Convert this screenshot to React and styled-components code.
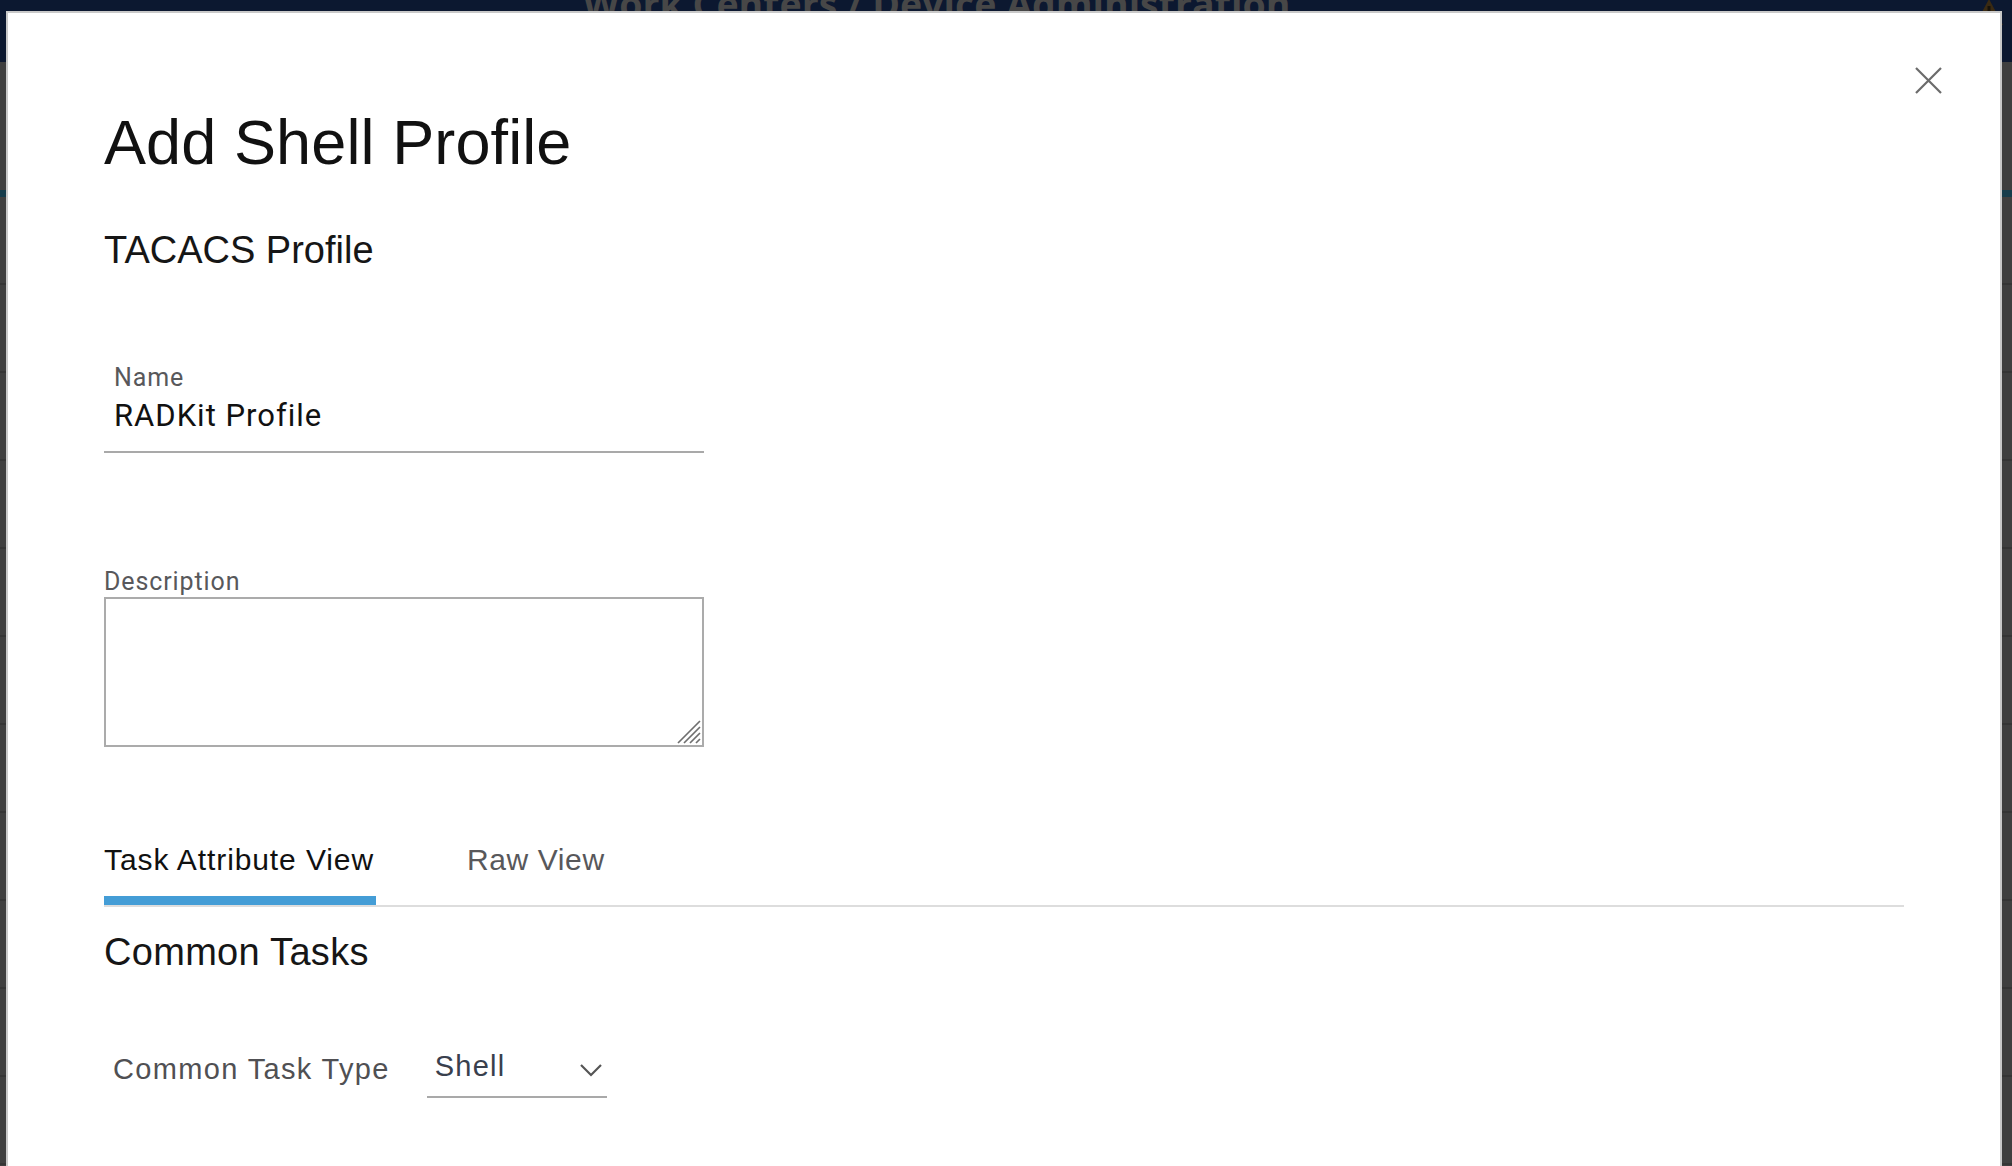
import React from "react";
import styled, { createGlobalStyle } from "styled-components";

const GlobalStyle = createGlobalStyle`
  html, body {
    margin: 0;
    padding: 0;
    height: 100%;
    overflow: hidden;
    background: #3e3e3e;
  }
  #root { height: 100%; }
  * { box-sizing: border-box; }
`;

const Page = styled.div`
  position: relative;
  height: 1166px;
  display: flex;
  flex-direction: column;
  background: #3e3e3e;
  overflow: hidden;
`;

const Header = styled.header`
  flex: 0 0 62px;
  display: flex;
  align-items: flex-start;
  padding-left: 583px;
  padding-right: 8px;
  background: #0c1830;
  overflow: hidden;
`;

const HeaderTitle = styled.div`
  margin-top: -15px;
  font-family: "Open Sans", "DejaVu Sans", sans-serif;
  font-weight: 700;
  font-size: 37.5px;
  line-height: 1;
  color: #474747;
  white-space: nowrap;
`;

const HeaderIcon = styled.svg`
  margin-left: auto;
  margin-top: -2px;
  flex: 0 0 auto;
`;

const SubHeader = styled.div`
  flex: 0 0 128px;
  background: #3f3f3f;
`;

const AccentLine = styled.div`
  flex: 0 0 7px;
  background: #163c4b;
`;

const BgRow = styled.div`
  flex: 0 0 88px;
  border-bottom: 2px solid #353535;
  background: #3f3f3f;
`;

const Modal = styled.section`
  position: absolute;
  left: 6px;
  top: 11px;
  right: 10px;
  bottom: -200px;
  background: #ffffff;
  border: 2px solid #c9c9c9;
  padding: 98px 96px 0;
  display: flex;
  flex-direction: column;
  align-items: flex-start;
`;

const CloseButton = styled.button`
  position: absolute;
  top: 54px;
  right: 58px;
  width: 27px;
  height: 27px;
  padding: 0;
  border: 0;
  background: transparent;
  cursor: pointer;
  display: flex;
`;

const Title = styled.h1`
  margin: 0;
  font-family: "Liberation Sans", Arial, sans-serif;
  font-weight: 400;
  font-size: 63px;
  line-height: 63px;
  letter-spacing: 0.1px;
  color: #111111;
`;

const SectionTitle = styled.h2`
  margin: ${(p) => p.$mt}px 0 0;
  font-family: "Liberation Sans", Arial, sans-serif;
  font-weight: 400;
  font-size: 38px;
  line-height: 38px;
  letter-spacing: ${(p) => p.$ls || 0}px;
  color: #161616;
`;

const Field = styled.div`
  margin-top: ${(p) => p.$mt}px;
  width: 600px;
  display: flex;
  flex-direction: column;
`;

const FieldLabel = styled.label`
  display: block;
  padding-left: ${(p) => (p.$inset ? 10 : 0)}px;
  font-family: Roboto, "Liberation Sans", sans-serif;
  font-size: 25px;
  line-height: 25px;
  letter-spacing: 0.9px;
  color: #58585b;
`;

const TextValue = styled.div`
  margin-top: 10px;
  padding: 0 10px 20px;
  border-bottom: 2px solid #a9a9a9;
  font-family: Roboto, "Liberation Sans", sans-serif;
  font-size: 31px;
  line-height: 31px;
  letter-spacing: 1px;
  color: #111111;
`;

const AreaWrap = styled.div`
  position: relative;
  margin-top: 3px;
  width: 600px;
  height: 150px;
  display: flex;
`;

const TextArea = styled.textarea`
  width: 100%;
  height: 100%;
  border: 2px solid #ababab;
  border-radius: 0;
  padding: 8px;
  font-family: Roboto, sans-serif;
  font-size: 24px;
  resize: none;
  outline: none;
  background: #fff;
`;

const Grip = styled.svg`
  position: absolute;
  right: 3px;
  bottom: 3px;
  pointer-events: none;
`;

const TabBar = styled.div`
  margin-top: 98px;
  width: 100%;
  display: flex;
  gap: 91px;
  border-bottom: 2px solid #dddddd;
`;

const Tab = styled.div`
  padding: 0 2px 21px 0;
  border-bottom: 9px solid ${(p) => (p.$active ? "#449dd6" : "transparent")};
  font-family: "Liberation Sans", Arial, sans-serif;
  font-size: 30px;
  line-height: 30px;
  letter-spacing: ${(p) => (p.$active ? 0.9 : 0.6)}px;
  color: ${(p) => (p.$active ? "#111111" : "#58585b")};
  cursor: pointer;
`;

const TaskRow = styled.div`
  margin-top: 84px;
  display: flex;
  align-items: flex-start;
  gap: 37px;
`;

const TaskLabel = styled.div`
  padding-left: 9px;
  font-family: "Liberation Sans", Arial, sans-serif;
  font-size: 29px;
  line-height: 29px;
  letter-spacing: 1.35px;
  color: #505053;
`;

const Select = styled.div`
  margin-top: -3px;
  width: 180px;
  display: flex;
  justify-content: space-between;
  align-items: flex-start;
  padding: 0 4px 15px 8px;
  border-bottom: 2px solid #a9a9a9;
  cursor: pointer;
`;

const SelectValue = styled.span`
  font-family: "Liberation Sans", Arial, sans-serif;
  font-size: 29px;
  line-height: 29px;
  letter-spacing: 1.2px;
  color: #39404d;
`;

const Chevron = styled.svg`
  margin-top: 11px;
  flex: 0 0 auto;
`;

export default function App() {
  const rows = Array.from({ length: 11 });
  return (
    <>
      <GlobalStyle />
      <Page>
        <Header>
          <HeaderTitle>Work Centers / Device Administration</HeaderTitle>
          <HeaderIcon width="30" height="28" viewBox="0 0 30 28">
            <path d="M15 1 L29 27 L1 27 Z" fill="#3a2a12" />
            <rect x="13.5" y="8" width="3" height="11" fill="#17120a" />
          </HeaderIcon>
        </Header>
        <SubHeader />
        <AccentLine />
        {rows.map((_, i) => (
          <BgRow key={i} />
        ))}

        <Modal>
          <CloseButton aria-label="Close">
            <svg width="27" height="27" viewBox="0 0 27 27">
              <path d="M1 1 L26 26 M26 1 L1 26" stroke="#6b6b6b" strokeWidth="2.2" fill="none" />
            </svg>
          </CloseButton>

          <Title>Add Shell Profile</Title>
          <SectionTitle $mt={57}>TACACS Profile</SectionTitle>

          <Field $mt={96}>
            <FieldLabel $inset>Name</FieldLabel>
            <TextValue>RADKit Profile</TextValue>
          </Field>

          <Field $mt={116}>
            <FieldLabel>Description</FieldLabel>
            <AreaWrap>
              <TextArea />
              <Grip width="25" height="25" viewBox="0 0 25 25">
                <path
                  d="M2 24 L24 2 M8 24 L24 8 M14 24 L24 14 M20 24 L24 20"
                  stroke="#6f6f6f"
                  strokeWidth="1.7"
                  fill="none"
                />
              </Grip>
            </AreaWrap>
          </Field>

          <TabBar>
            <Tab $active>Task Attribute View</Tab>
            <Tab>Raw View</Tab>
          </TabBar>

          <SectionTitle $mt={26} $ls={0.3}>Common Tasks</SectionTitle>

          <TaskRow>
            <TaskLabel>Common Task Type</TaskLabel>
            <Select>
              <SelectValue>Shell</SelectValue>
              <Chevron width="24" height="14" viewBox="0 0 24 14">
                <path d="M2 2 L12 12 L22 2" stroke="#555555" strokeWidth="2.2" fill="none" />
              </Chevron>
            </Select>
          </TaskRow>
        </Modal>
      </Page>
    </>
  );
}
